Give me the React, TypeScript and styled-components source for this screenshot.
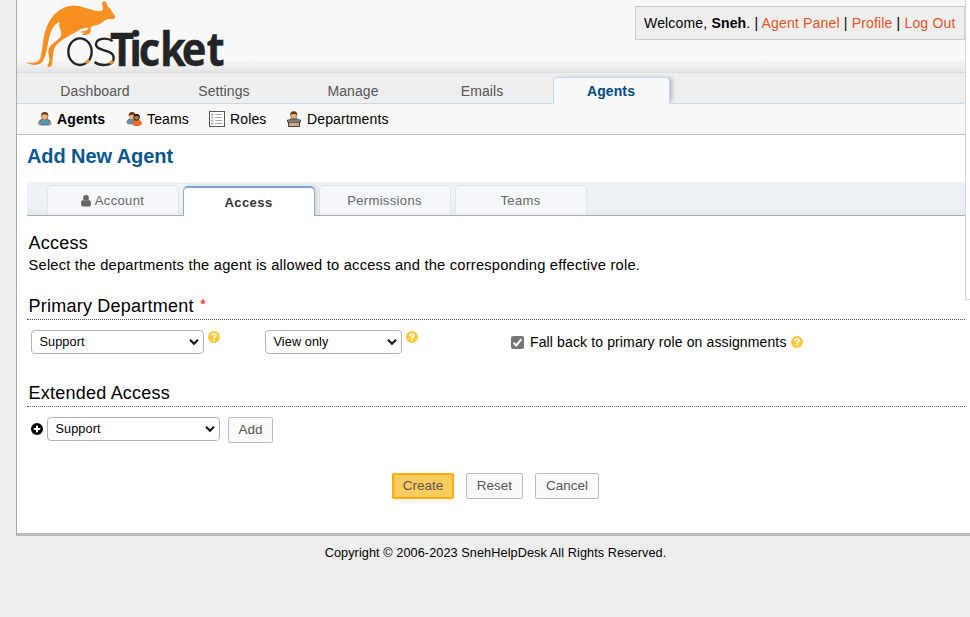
import React from "react";
import styled, { createGlobalStyle, css } from "styled-components";

const GlobalStyle = createGlobalStyle`
  *, *::before, *::after { box-sizing: border-box; }
  html, body { margin: 0; background: #eee; overflow: hidden; }
  body { font-family: "Liberation Sans", Arial, sans-serif; font-size: 14px; color: #000; letter-spacing: 0.13px; }
`;

const Page = styled.div`
  width: 970px;
  height: 617px;
  overflow: hidden;
  background: #eee;
`;

const Container = styled.div`
  margin-left: 16px;
  height: 536px;
  display: flex;
  background: #fff;
  border-left: 1px solid #aaa;
  border-bottom: 3px solid #bbb;
`;

const Main = styled.div`
  width: 948px;
  flex: none;
`;

const Gutter = styled.div`
  flex: 1;
  height: 300px;
  background: #fff;
  border: solid #d6d6d6;
  border-width: 0 0 1px 1px;
`;

const Header = styled.header`
  height: 73px;
  display: flex;
  justify-content: space-between;
  align-items: flex-start;
  background: linear-gradient(#f8f8f8 0, #f8f8f8 60px, #e4e4e4 72px);
  border-bottom: 1px solid #ddd;
`;

const LogoSvg = styled.svg`
  display: block;
  flex: none;
  overflow: visible;
`;

const Welcome = styled.div`
  margin-top: 6px;
  width: 330px;
  height: 34px;
  border: 1px solid #ccc;
  background: #eee;
  padding-left: 8px;
  line-height: 32px;
  white-space: nowrap;
  letter-spacing: 0.17px;
`;

const Link = styled.a`
  color: #e65524;
`;

const Nav = styled.nav`
  height: 31px;
  display: flex;
  align-items: flex-end;
  padding-left: 20px;
  background: #eee;
  border-bottom: 1px solid #c5d9ee;
`;

const NavTab = styled.a<{ $active?: boolean }>`
  width: 117px;
  margin-right: 12px;
  height: 26px;
  padding-right: 1px;
  line-height: 28px;
  text-align: center;
  color: #555;
  letter-spacing: 0.1px;
  ${(p) =>
    p.$active &&
    css`
      height: 27px;
      line-height: 26px;
      margin-bottom: -1px;
      color: #004a80;
      font-weight: bold;
      background: #f8f8f8;
      border: 1px solid #c5d9ee;
      border-bottom: 0;
      border-radius: 5px 5px 0 0;
      box-shadow: 4px -1px 4px -2px rgba(0, 0, 0, 0.25);
      clip-path: inset(-8px -8px 0 -8px);
    `}
`;

const SubNav = styled.nav`
  height: 31px;
  display: flex;
  align-items: center;
  padding-left: 20px;
  background: #f8f8f8;
  border-bottom: 1px solid #bbb;
`;

const SubItem = styled.a<{ $active?: boolean; $width: number; $gap?: number }>`
  width: ${(p) => p.$width}px;
  display: flex;
  align-items: center;
  gap: ${(p) => p.$gap ?? 4}px;
  white-space: nowrap;
  font-weight: ${(p) => (p.$active ? "bold" : "normal")};
`;

const Content = styled.main`
  padding-left: 10px;
`;

const Title = styled.h2`
  margin: 0;
  height: 47px;
  padding-top: 9px;
  font-size: 20px;
  line-height: 24px;
  color: #0a568e;
  letter-spacing: -0.08px;
`;

const Tabs = styled.div`
  height: 34px;
  display: flex;
  align-items: flex-end;
  gap: 4px;
  padding-left: 20px;
  background: linear-gradient(#ecf2f6 0, #ecf2f6 24px, #e3e8ec 33px);
  border-bottom: 1px solid #aaa;
`;

const Tab = styled.button<{ $active?: boolean }>`
  width: 132px;
  height: 30px;
  padding: 0 1px 0 0;
  display: flex;
  align-items: center;
  justify-content: center;
  gap: 4px;
  font: 13px "Liberation Sans", Arial, sans-serif;
  letter-spacing: 0.35px;
  color: #666;
  background: linear-gradient(#f5f7fb 0, #f5f7fb 24px, #ecedf1 30px);
  border: 1px solid #e2e4e8;
  border-bottom: 0;
  border-radius: 5px 5px 0 0;
  ${(p) =>
    p.$active &&
    css`
      color: #333;
      font-weight: bold;
      letter-spacing: 0.45px;
      background: #fff;
      border: 1px solid #aaa;
      border-top: 2px solid #7ca3d9;
      border-bottom: 0;
      margin-bottom: -1px;
      box-shadow: 3px -1px 4px -1px rgba(0, 0, 0, 0.12);
      clip-path: inset(-8px -8px 0 -8px);
    `}
`;

const Section = styled.h3<{ $top: number }>`
  margin: ${(p) => p.$top}px 0 0;
  padding-left: 1.5px;
  font-size: 18px;
  font-weight: normal;
  line-height: 22px;
  letter-spacing: 0.23px;
`;

const Required = styled.span`
  color: #f00;
  font-size: 15px;
  line-height: 15px;
  vertical-align: 3px;
  margin-left: 1px;
`;

const Intro = styled.p`
  margin: 0;
  padding-left: 1.5px;
  font-size: 14.7px;
  line-height: 22px;
  letter-spacing: 0.21px;
`;

const Rule = styled.div<{ $gap: number }>`
  margin-top: ${(p) => p.$gap}px;
  border-bottom: 1px dotted #555;
`;

const FieldRow = styled.div<{ $top: number; $left: number }>`
  margin-top: ${(p) => p.$top}px;
  padding-left: ${(p) => p.$left}px;
  display: flex;
  align-items: flex-start;
`;

const Select = styled.div<{ $width: number }>`
  width: ${(p) => p.$width}px;
  height: 24px;
  padding: 0 3px 0 7.5px;
  display: flex;
  align-items: center;
  justify-content: space-between;
  border: 1px solid #b3b3b3;
  border-radius: 4px;
  background: #fff;
  font-size: 12.7px;
  letter-spacing: 0.1px;
`;

const Slot = styled.div<{ $width: number; $pad?: number }>`
  width: ${(p) => p.$width}px;
  padding-top: ${(p) => p.$pad ?? 0}px;
  display: flex;
  align-items: flex-start;
  flex: none;
`;

const CheckLabel = styled.label`
  height: 24px;
  display: flex;
  align-items: center;
  white-space: nowrap;
`;

const CheckText = styled.span`
  margin: 0 4px 0 6px;
`;

const HelpSpace = styled.span`
  margin: 1px 0 0 3.5px;
  display: flex;
`;

const Button = styled.button<{ $width: number; $primary?: boolean }>`
  width: ${(p) => p.$width}px;
  height: 26px;
  padding: 0 0 1px;
  font: 13.5px "Liberation Sans", Arial, sans-serif;
  line-height: 21px;
  letter-spacing: 0;
  color: #555;
  background: ${(p) => (p.$primary ? "#ffcb5c" : "#fafafa")};
  border: ${(p) => (p.$primary ? "2px solid #ffad00" : "1px solid #bbb")};
  border-radius: 2px;
`;

const Actions = styled.div`
  margin-top: 30px;
  padding-left: 365px;
  display: flex;
  gap: 12px;
`;

const Footer = styled.footer`
  padding: 8px 0 0 21px;
  text-align: center;
  font-size: 12.7px;
  line-height: 18px;
  letter-spacing: 0.08px;
`;

const Logo = () => (
  <LogoSvg width="220" height="72" viewBox="51 0 660 216">
    <path
      fill="#f79021"
      d="M78 186C95 191 115 190 121 174C128 152 127 126 134 100C144 60 170 22 215 17C250 14 276 38 305 32C312 29 307 20 306 12Q307 2 314 4Q322 7 322 19C333 24 333 34 345 47Q347 56 336 58C318 53 313 65 297 73C285 78 278 76 274 82C270 87 275 90 270 98Q266 106 249 105Q243 102 251 100L259 98Q243 98 241 95Q250 93 261 91L266 84C247 80 236 93 213 104C195 114 181 122 170 134C157 149 161 166 157 184Q158 202 145 201Q139 198 145 191C154 177 140 163 147 145C153 130 175 122 183 107C187 90 173 81 179 65C160 73 151 94 146 120C141 147 138 171 126 187C113 200 87 195 78 186Z"
    />
    <g fill="none" stroke="#222426" strokeWidth="7">
      <ellipse cx="240" cy="155" rx="35" ry="40" />
      <path d="M338 123C321 112 288 113 288 133C288 157 341 145 341 174C341 200 299 199 284 186" />
      <path stroke="#f79021" strokeWidth="9" d="M257 189L267 180M329 191L339 183" />
    </g>
    <text
      transform="scale(.89 1)"
      x="371 436 467.5 539 613 696"
      y="197"
      fill="#222426"
      stroke="#222426"
      strokeWidth="1"
      fontFamily="Open Sans, Noto Sans, sans-serif"
      fontWeight="700"
      fontSize="141"
      letterSpacing="0"
    >
      Ticket
    </text>
  </LogoSvg>
);

const Chevron = () => (
  <svg width="12" height="8" viewBox="0 0 12 8" fill="none" stroke="#111" strokeWidth="2">
    <path d="M2 1.8L6 5.8L10 1.8" />
  </svg>
);

const Help = () => (
  <svg width="12" height="12" viewBox="0 0 12 12">
    <circle cx="6" cy="6" r="6" fill="#ffc83d" />
    <path d="M4 4.7C4 2.5 8 2.5 8 4.5C8 5.9 6 5.7 6 7.2M6 8.2V9.8" fill="none" stroke="#fff" strokeWidth="1.7" />
  </svg>
);

const Plus = () => (
  <svg width="12" height="12" viewBox="0 0 12 12">
    <circle cx="6" cy="6" r="6" />
    <path d="M6 2.7V9.3M2.7 6H9.3" stroke="#fff" strokeWidth="2" />
  </svg>
);

const Check = () => (
  <svg width="13" height="13" viewBox="0 0 13 13">
    <rect width="13" height="13" rx="2" fill="#767676" />
    <path d="M2.6 6.8L5.2 9.4L10.4 3.2" fill="none" stroke="#fff" strokeWidth="2" />
  </svg>
);

const UserGlyph = () => (
  <svg width="10" height="12" viewBox="0 0 10 12" fill="#666">
    <circle cx="5" cy="3" r="2.9" />
    <path d="M0 9Q0 5 2.2 5Q5 7.2 7.8 5Q10 5 10 9Q10 11.5 8 11.5H2Q0 11.5 0 9Z" />
  </svg>
);

const AgentIcon = () => (
  <svg width="16" height="16" viewBox="0 0 16 16">
    <path d="M2 12.5Q2 8.5 5.5 8.3H10Q13.3 8.5 13.5 12.5L12 14H3.5Z" fill="#5596b5" stroke="#315c73" strokeWidth=".8" />
    <path d="M1.6 11.5L4 13.2L2.8 14.3L1 13.4ZM14 11.5L11.5 13.2L12.7 14.3L14.5 13.4Z" fill="#eab580" stroke="#9b6a43" strokeWidth=".4" />
    <ellipse cx="7.7" cy="5.3" rx="3.2" ry="3.6" fill="#eab580" stroke="#8b572f" strokeWidth=".7" />
    <path d="M4.1 5Q3.9 1 7.7 1Q11.6 1 11.3 5Q10 3.4 7.5 3.6Q5 3.5 4.1 5Z" fill="#6b3b13" />
  </svg>
);

const TeamIcon = () => (
  <svg width="17" height="16" viewBox="0 0 17 16">
    <path d="M1 12Q1.2 7.7 5 7.7H8V12.8H2Z" fill="#5596b5" stroke="#315c73" strokeWidth=".7" />
    <circle cx="6" cy="5" r="3.2" fill="#eab580" />
    <path d="M2.7 5Q2.5 1 6 1Q9.5 1 9.5 4Q6 3 2.7 5Z" fill="#6b3b13" />
    <path d="M6.3 13Q6.5 9.5 9 9.3H12.5Q15.3 9.7 15.5 13L13.5 14.5H8.3Z" fill="#ee6b2b" stroke="#a74718" strokeWidth=".7" />
    <circle cx="10.6" cy="6.3" r="2.9" fill="#b57947" stroke="#28190f" strokeWidth="1" />
    <path d="M7.5 5.6Q8 3 10.6 3Q13.4 3 13.7 5.6Q10.5 4.5 7.5 5.6Z" fill="#28190f" />
    <path d="M.8 11.5L3 12.7L1.4 13.5ZM6 12.5L8.2 13.6L6.7 14.7ZM14 13.6L15.8 12.4L16.2 14.3Z" fill="#eab580" />
  </svg>
);

const RoleIcon = () => (
  <svg width="16" height="16" viewBox="0 0 16 16">
    <rect x=".5" y=".5" width="15" height="15" fill="#fff" stroke="#555" />
    <path d="M2 3.5H4.5M2 6.5H4.5M2 9.5H4.5M2 12.5H4.5" stroke="#b5b5b5" strokeWidth="1.8" />
    <path d="M6 3.5H13.5M6 6.5H13.5M6 9.5H13.5M6 12.5H13.5" stroke="#aaa" />
  </svg>
);

const DeptIcon = () => (
  <svg width="16" height="16" viewBox="0 0 16 16">
    <path d="M3 10Q3 7 6 7H10Q13 7 13 10Z" fill="#4f8fae" />
    <circle cx="7.7" cy="4.4" r="3.2" fill="#eab580" stroke="#8b572f" strokeWidth=".6" />
    <path d="M4.2 4Q4.2 .3 7.7 .3Q11.4 .3 11.2 4Q7.2 2 4.2 4Z" fill="#6b3b13" />
    <path d="M2.5 11H13.5V15.5H2.5Z" fill="#d3aa8b" stroke="#444" />
    <path d="M1.5 9H14.5V11H1.5Z" fill="#d3aa8b" stroke="#444" />
  </svg>
);

export default function App() {
  return (
    <Page>
      <GlobalStyle />
      <Container>
        <Main>
          <Header>
            <Logo />
            <Welcome>
              Welcome, <b>Sneh</b>. | <Link>Agent Panel</Link> | <Link>Profile</Link> | <Link>Log Out</Link>
            </Welcome>
          </Header>
          <Nav>
            <NavTab>Dashboard</NavTab>
            <NavTab>Settings</NavTab>
            <NavTab>Manage</NavTab>
            <NavTab>Emails</NavTab>
            <NavTab $active>Agents</NavTab>
          </Nav>
          <SubNav>
            <SubItem $active $width={89}><AgentIcon />Agents</SubItem>
            <SubItem $width={83}><TeamIcon />Teams</SubItem>
            <SubItem $width={77} $gap={5}><RoleIcon />Roles</SubItem>
            <SubItem $width={110} $gap={5}><DeptIcon />Departments</SubItem>
          </SubNav>
          <Content>
            <Title>Add New Agent</Title>
            <Tabs>
              <Tab><UserGlyph />Account</Tab>
              <Tab $active>Access</Tab>
              <Tab>Permissions</Tab>
              <Tab>Teams</Tab>
            </Tabs>
            <Section $top={16}>Access</Section>
            <Intro>Select the departments the agent is allowed to access and the corresponding effective role.</Intro>
            <Section $top={19}>Primary Department <Required>*</Required></Section>
            <Rule $gap={2} />
            <FieldRow $top={10} $left={4}>
              <Slot $width={234}>
                <Select $width={173}>Support<Chevron /></Select>
                <HelpSpace><Help /></HelpSpace>
              </Slot>
              <Slot $width={246}>
                <Select $width={137}>View only<Chevron /></Select>
                <HelpSpace><Help /></HelpSpace>
              </Slot>
              <CheckLabel>
                <Check />
                <CheckText>Fall back to primary role on assignments</CheckText>
                <Help />
              </CheckLabel>
            </FieldRow>
            <Section $top={28}>Extended Access</Section>
            <Rule $gap={2} />
            <FieldRow $top={10} $left={4}>
              <Slot $width={16} $pad={6}><Plus /></Slot>
              <Slot $width={181}><Select $width={173}>Support<Chevron /></Select></Slot>
              <Button $width={45}>Add</Button>
            </FieldRow>
            <Actions>
              <Button $width={62} $primary>Create</Button>
              <Button $width={57}>Reset</Button>
              <Button $width={64}>Cancel</Button>
            </Actions>
          </Content>
        </Main>
        <Gutter />
      </Container>
      <Footer>Copyright © 2006-2023 SnehHelpDesk All Rights Reserved.</Footer>
    </Page>
  );
}
